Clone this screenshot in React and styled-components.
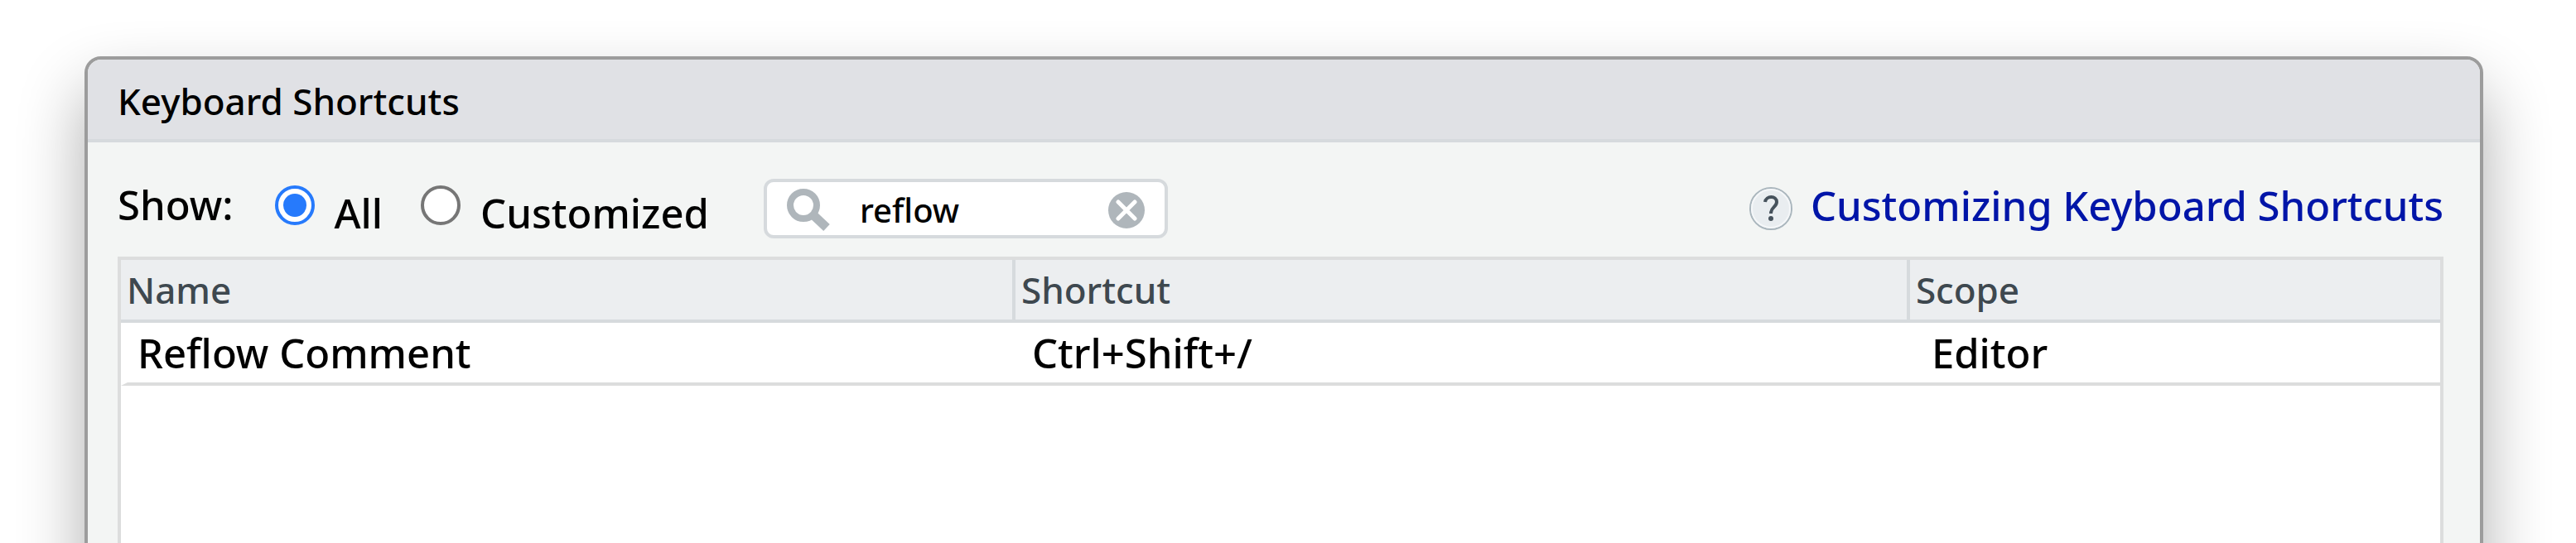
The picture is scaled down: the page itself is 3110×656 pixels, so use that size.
import React, { useState } from "react";
import styled, { createGlobalStyle } from "styled-components";

const shortcuts = [
  { name: "Reflow Comment", shortcut: "Ctrl+Shift+/", scope: "Editor" },
];

const App = () => {
  const [show, setShow] = useState("all");
  const [filter, setFilter] = useState("reflow");

  const rows = shortcuts.filter((item) =>
    item.name.toLowerCase().includes(filter.toLowerCase())
  );

  return (
    <PageStyled>
      <GlobalStyle />
      <DialogStyled role="dialog" aria-labelledby="dialog-title">
        <TitleBar id="dialog-title">Keyboard Shortcuts</TitleBar>
        <Toolbar>
          <RadioGroup role="radiogroup" aria-labelledby="show-label">
            <ShowLabel id="show-label">Show:</ShowLabel>
            <RadioLabel>
              <Radio
                name="show"
                checked={show === "all"}
                onChange={() => setShow("all")}
              />
              <span>All</span>
            </RadioLabel>
            <RadioLabel>
              <Radio
                name="show"
                checked={show === "customized"}
                onChange={() => setShow("customized")}
              />
              <span>Customized</span>
            </RadioLabel>
          </RadioGroup>
          <SearchBox>
            <SearchIcon />
            <SearchInput
              aria-label="Filter shortcuts"
              value={filter}
              onChange={(e) => setFilter(e.target.value)}
            />
            <ClearButton aria-label="Clear" onClick={() => setFilter("")}>
              <ClearIcon />
            </ClearButton>
          </SearchBox>
          <HelpLink href="#customizing">
            <HelpIcon />
            <span>Customizing Keyboard Shortcuts</span>
          </HelpLink>
        </Toolbar>
        <TablePanel>
          <ShortcutTable>
            <thead>
              <tr>
                <th>Name</th>
                <th>Shortcut</th>
                <th>Scope</th>
              </tr>
            </thead>
            <tbody>
              {rows.map((item) => (
                <tr key={item.name}>
                  <td>{item.name}</td>
                  <td>{item.shortcut}</td>
                  <td>{item.scope}</td>
                </tr>
              ))}
            </tbody>
          </ShortcutTable>
        </TablePanel>
      </DialogStyled>
    </PageStyled>
  );
};

const SearchIcon = () => (
  <svg width="52" height="52" viewBox="0 0 52 52" fill="none" stroke="#afb6bb">
    <circle cx="20" cy="20" r="16" strokeWidth="8" />
    <path d="M31 31 L48 47" strokeWidth="11" />
  </svg>
);

const ClearIcon = () => (
  <svg width="44" height="44" viewBox="0 0 44 44">
    <circle cx="22" cy="22" r="22" fill="#afb6bb" />
    <path
      d="M12 12 L32 32 M32 12 L12 32"
      stroke="#fff"
      strokeWidth="5"
      strokeLinecap="round"
    />
  </svg>
);

const HelpIcon = () => (
  <svg width="52" height="52" viewBox="0 0 52 52" fill="none">
    <circle cx="26" cy="26" r="25" fill="#e9edf0" stroke="#aab6bd" strokeWidth="2" />
    <circle cx="26" cy="26" r="23" stroke="#f5f7f9" strokeWidth="2" />
    <path
      d="M19 18 C20 10 33 10 33 18 C33 24 26 24 26 32"
      stroke="#46525c"
      strokeWidth="4"
    />
    <circle cx="26" cy="38" r="3" fill="#46525c" />
  </svg>
);

const GlobalStyle = createGlobalStyle`
  * {
    box-sizing: border-box;
  }
  body {
    margin: 0;
    background: #fff;
    color: #000;
    font-family: "Noto Sans", "Open Sans", sans-serif;
    font-size: 49px;
    font-weight: 500;
  }
  svg {
    display: block;
    flex-shrink: 0;
  }
`;

const PageStyled = styled.div`
  height: 100vh;
  padding: 68px 112px 0 102px;
  overflow: hidden;
`;

/* The dialog runs on past the bottom of the window */
const DialogStyled = styled.div`
  display: flex;
  flex-direction: column;
  height: calc(100% + 120px);
  background: #f3f5f4;
  border: 4px solid #9c9c9c;
  border-radius: 20px;
  box-shadow: 0 40px 80px rgba(0, 0, 0, 0.32);
`;

const TitleBar = styled.div`
  padding: 4px 36px 0;
  background: #e0e1e5;
  border-bottom: 4px solid #d6dadd;
  border-radius: 16px 16px 0 0;
  font-size: 44px;
  line-height: 92px;
`;

const Toolbar = styled.div`
  display: flex;
  align-items: center;
  gap: 66px;
  padding: 44px 44px 22px 36px;
  line-height: 60px;
`;

const RadioGroup = styled.div`
  display: flex;
  align-items: center;
  gap: 46px;
`;

const ShowLabel = styled.span`
  padding: 0 4px 10px 0;
`;

const RadioLabel = styled.label`
  display: flex;
  align-items: center;
  gap: 24px;
  span {
    padding-top: 10px;
  }
`;

const Radio = styled.input.attrs({ type: "radio" })`
  appearance: none;
  display: grid;
  place-content: center;
  width: 48px;
  height: 48px;
  margin: 0 0 8px;
  background: #fff;
  border: 4px solid #767676;
  border-radius: 50%;
  &:checked {
    border-color: #267afc;
  }
  &:checked::before {
    content: "";
    width: 28px;
    height: 28px;
    background: #267afc;
    border-radius: 50%;
  }
`;

const SearchBox = styled.div`
  display: flex;
  align-items: center;
  width: 488px;
  height: 72px;
  padding: 4px 24px 0;
  background: #fff;
  border: 4px solid #d6dadd;
  border-radius: 12px;
`;

const SearchInput = styled.input`
  flex: 1;
  min-width: 0;
  height: 56px;
  margin: 0;
  padding: 0 0 0 36px;
  background: none;
  border: none;
  outline: none;
  color: inherit;
  font: inherit;
  font-size: 40px;
`;

const ClearButton = styled.button`
  padding: 0;
  background: none;
  border: none;
  cursor: pointer;
`;

const HelpLink = styled.a`
  display: flex;
  align-items: center;
  gap: 22px;
  margin-left: auto;
  color: #0015a8;
  text-decoration: none;
  span {
    padding-bottom: 8px;
  }
`;

const TablePanel = styled.div`
  flex: 1;
  margin: 0 44px 0 36px;
  background: #fff;
  border: 4px solid #dcdddd;
`;

const ShortcutTable = styled.table`
  width: 100%;
  table-layout: fixed;
  border-collapse: separate;
  border-spacing: 0;
  text-align: left;
  line-height: 72px;
  th {
    padding: 0 7px;
    background: #eceef0;
    border-right: 4px solid #d6dadd;
    border-bottom: 4px solid #d6dadd;
    color: #3e484f;
    font-size: 44px;
    font-weight: 500;
  }
  th:nth-child(-n + 2) {
    width: 38.57%;
  }
  th:last-child {
    border-right: none;
  }
  td {
    padding: 0 20px;
    border-bottom: 4px solid #dcdddd;
  }
  td:first-child {
    padding-left: 12px;
    border-left: 8px solid transparent;
  }
  td:last-child {
    padding-left: 26px;
  }
`;

export default App;
